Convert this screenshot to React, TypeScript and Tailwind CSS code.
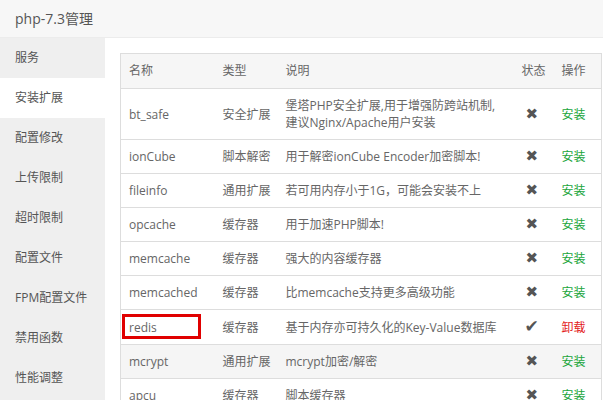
import React from "react";

const menu = ["服务", "安装扩展", "配置修改", "上传限制", "超时限制", "配置文件", "FPM配置文件", "禁用函数", "性能调整"];

type Row = { name: string; type: string; desc: React.ReactNode; installed: boolean; hover?: boolean; mark?: boolean };

const rows: Row[] = [
  { name: "bt_safe", type: "安全扩展", desc: (<>堡塔PHP安全扩展,用于增强防跨站机制,<br />建议Nginx/Apache用户安装</>), installed: false },
  { name: "ionCube", type: "脚本解密", desc: "用于解密ionCube Encoder加密脚本!", installed: false },
  { name: "fileinfo", type: "通用扩展", desc: "若可用内存小于1G，可能会安装不上", installed: false },
  { name: "opcache", type: "缓存器", desc: "用于加速PHP脚本!", installed: false },
  { name: "memcache", type: "缓存器", desc: "强大的内容缓存器", installed: false },
  { name: "memcached", type: "缓存器", desc: "比memcache支持更多高级功能", installed: false },
  { name: "redis", type: "缓存器", desc: "基于内存亦可持久化的Key-Value数据库", installed: true, mark: true },
  { name: "mcrypt", type: "通用扩展", desc: "mcrypt加密/解密", installed: false, hover: true },
  { name: "apcu", type: "缓存器", desc: "脚本缓存器", installed: false },
];

export default function App() {
  return (
    <div
      className="w-[603px] h-[400px] overflow-hidden bg-white flex flex-col text-[12px] text-[#666]"
      style={{ fontFamily: '"Open Sans", "Noto Sans CJK SC", sans-serif' }}
    >
      <div className="h-[38px] shrink-0 bg-[#f7f7f7] border-b border-[#ececec] flex items-center pl-[15px] text-[14px] text-[#555]">
        php-7.3管理
      </div>
      <div className="flex flex-1 min-h-0">
        <div className="w-[105px] shrink-0 bg-[#efefef] flex flex-col">
          {menu.map((m, i) => (
            <div
              key={m}
              className={`h-[40px] shrink-0 flex items-center pl-[15px] text-[12px] text-[#555] whitespace-nowrap ${i === 1 ? "bg-white" : ""}`}
            >
              {m}
            </div>
          ))}
        </div>
        <div className="flex-1 pl-[15px] pt-[15px] relative">
          <table className="w-[481px] border-collapse border border-[#ddd] table-fixed">
            <colgroup>
              <col className="w-[94px]" />
              <col className="w-[63px]" />
              <col className="w-[236px]" />
              <col className="w-[40px]" />
              <col className="w-[48px]" />
            </colgroup>
            <thead>
              <tr className="bg-[#f6f6f6] h-[35px]">
                <th className="text-left font-normal px-[8px] border-b border-[#ddd] whitespace-nowrap">名称</th>
                <th className="text-left font-normal px-[8px] border-b border-[#ddd] whitespace-nowrap">类型</th>
                <th className="text-left font-normal px-[8px] border-b border-[#ddd] whitespace-nowrap">说明</th>
                <th className="text-left font-normal px-[8px] border-b border-[#ddd] whitespace-nowrap">状态</th>
                <th className="text-left font-normal px-[8px] border-b border-[#ddd] whitespace-nowrap">操作</th>
              </tr>
            </thead>
            <tbody>
              {rows.map((r) => (
                <tr key={r.name} className={`border-b border-[#ddd] ${r.hover ? "bg-[#f5f5f5]" : ""}`}>
                  <td className="px-[8px] py-[8px] leading-[17px] relative whitespace-nowrap">
                    {r.name}
                    {r.mark && (
                      <div className="absolute left-[1px] top-[4px] w-[79px] h-[25px] border-[3px] border-[#e00000]" />
                    )}
                  </td>
                  <td className="px-[8px] py-[8px] leading-[17px] whitespace-nowrap overflow-visible">{r.type}</td>
                  <td className="px-[8px] py-[8px] leading-[17px] whitespace-nowrap">{r.desc}</td>
                  <td className="px-[8px] py-[8px] leading-[17px] text-[#555] whitespace-nowrap">
                    {r.installed ? (
                      <span className="pl-[3px] text-[17px] text-[#555]" style={{ fontFamily: '"DejaVu Sans", sans-serif' }}>
                        ✔
                      </span>
                    ) : (
                      <span className="pl-[4px] text-[15px]" style={{ fontFamily: '"DejaVu Sans", sans-serif' }}>
                        ✖
                      </span>
                    )}
                  </td>
                  <td className={`px-[8px] py-[8px] leading-[17px] whitespace-nowrap ${r.installed ? "text-[#e31b1b]" : "text-[#20a53a]"}`}>
                    {r.installed ? "卸载" : "安装"}
                  </td>
                </tr>
              ))}
            </tbody>
          </table>
        </div>
      </div>
    </div>
  );
}
